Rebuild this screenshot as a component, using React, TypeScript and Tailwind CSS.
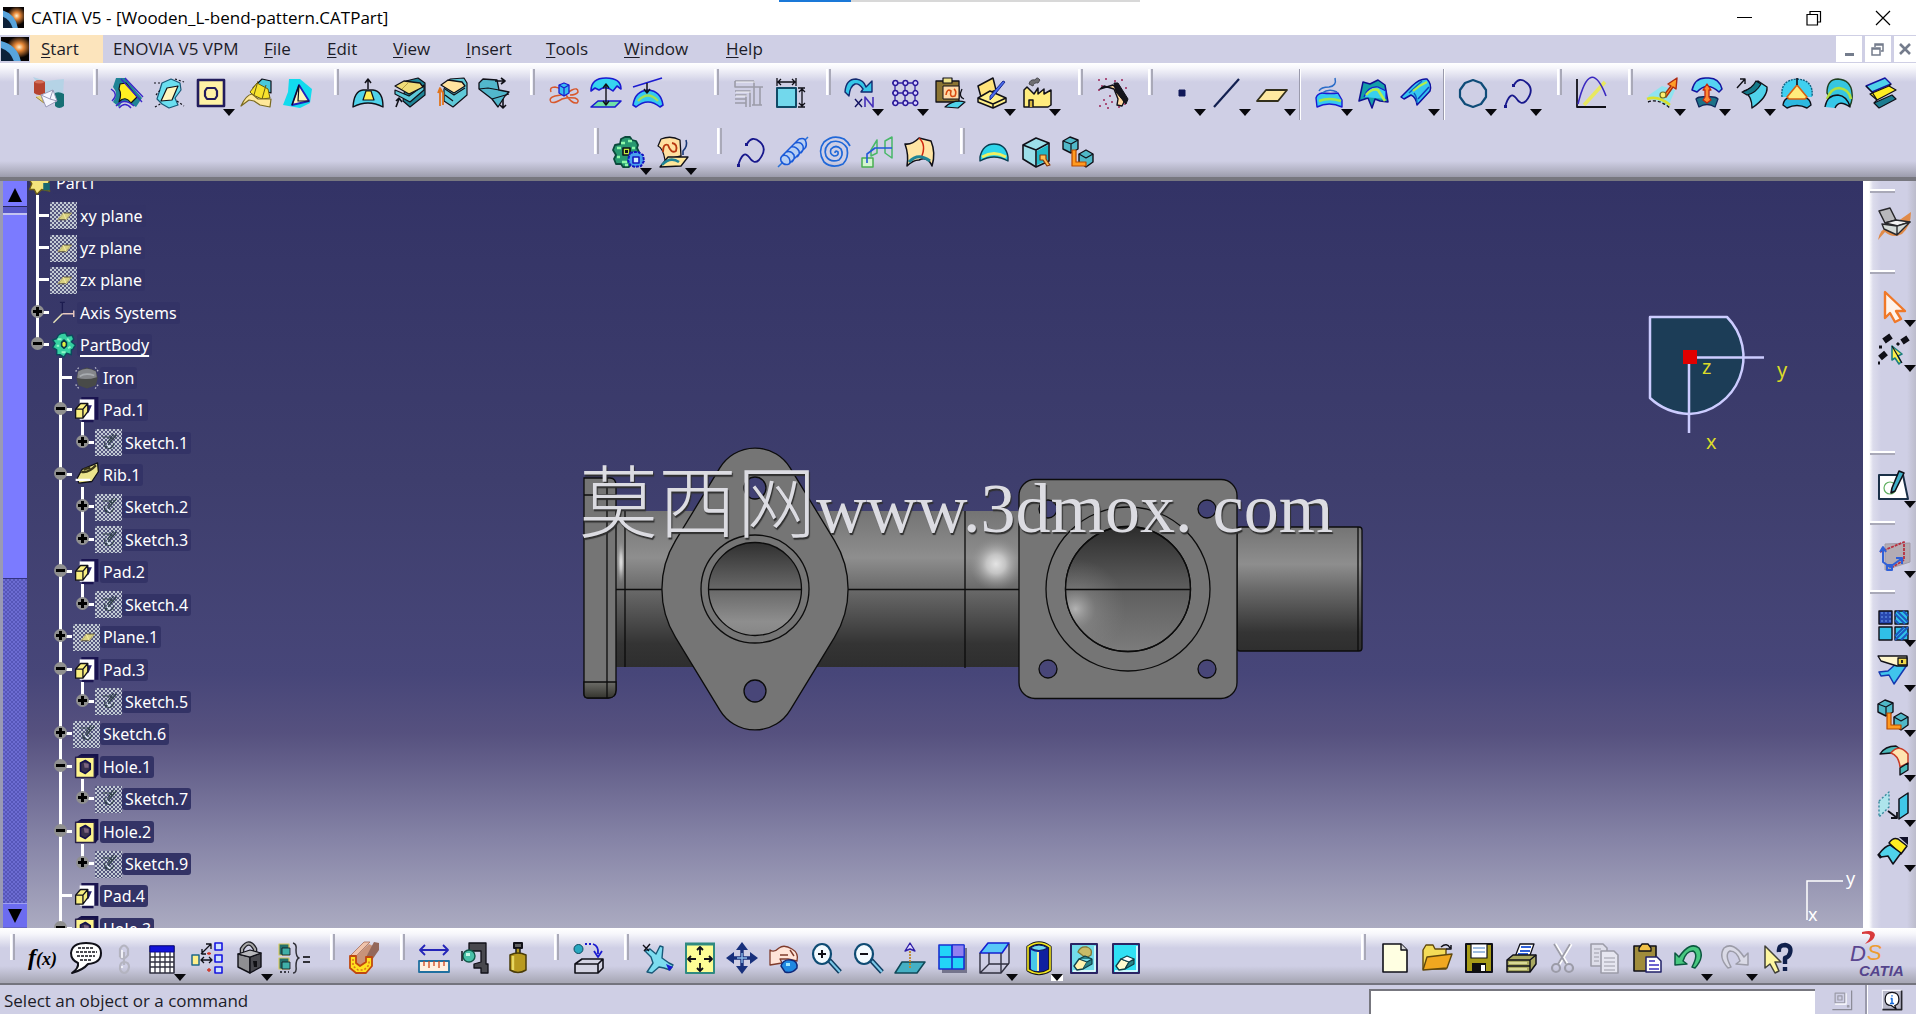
import React from "react";

type Shape = [d: string, fill?: string, stroke?: string, width?: number, dash?: string];

const K = "#101018";
const C = "#4fd2ea";
const Y = "#fff08a";
const B = "#1a1ad0";
const T = "#1f8496";
const G = "#9c9ca8";
const N = "none";

const icons: Record<string, Shape[]> = {
  studio: [
    ["M1 0 L14 4 L32 2 L31 18 L16 22 Z", "#b5d3e6", N],
    ["M2 5 Q7 1 13 5 V16 Q7 20 2 16 Z", "#b5432f", N],
    ["M2 5 Q7 8 13 5 Q7 1 2 5", "#d4705a", N],
    ["M23 16 Q27 14 32 17 V29 Q27 33 23 29 Z", "#176f74", N],
    ["M4 20 L12 26 L9 18", "#e7d78a", "#a28a30", 1],
    ["M9 18 L21 13 L25 24 L14 30 Z", "#f6f6ff", "#9a9ab8", 1],
    ["M9 18 L18 22 L21 13 M18 22 L25 24", N, "#9a9ab8", 1],
  ],
  fillet: [
    ["M5 1 L14 1 L31 21 L25 30 L20 27 Q13 20 8 30 L2 25 Q8 17 2 10 Z", T, N],
    ["M9 7 L15 6 L26 20 L20 26 Q14 18 8 25 Q11 17 8 12 Z", "#ffee22", K, 1.2],
    ["M10 2 L31 25 M14 1 L32 20 M0 12 Q8 17 1 24 M8 31 Q14 24 20 31 M5 29 Q13 20 23 29", N, "#3a28c8", 1.4],
  ],
  draft: [
    ["M9 6 L18 2 L27 6 L28 13 L22 21 L25 28 L16 31 L9 27 L4 22 Z", "#6adff0", "#185878", 1.2],
    ["M14 11 L25 9 L19 23 L8 24 Z", "#fff6bd", K, 1.2],
    ["M1 6 H9 M22 2 L31 5 M2 30 L9 26 M24 24 L31 29 M3 18 L8 12", N, K, 1.2, "2 2"],
  ],
  shell: [
    ["M3 3 H29 V29 H3 Z", "#fff3a6", "#221c5c", 2.6],
    ["M12 11 H20 L22 14 V19 L20 22 H12 L10 19 V14 Z", "#fff3a6", "#221c5c", 2.2],
  ],
  thickness: [
    ["M13 11 L22 2 L31 4 V16 L22 13 Z", "#49c8dc", K, 1.2],
    ["M10 15 L17 6 L28 12 L30 21 L22 22 L13 18 Z", "#f7e22c", "#6a5c10", 1],
    ["M1 29 Q6 18 12 17 L18 22 L31 22 L30 30 L20 28 L14 24 L9 23 Z", "#ffe89a", "#7a6a20", 1.2],
    ["M18 4 L14 18 M26 8 L22 22", N, "#6a5c10", 1],
  ],
  replaceface: [
    ["M7 2 L18 2 L30 12 L28 26 L18 31 L1 28 L6 15 Z", "#11dbee", N],
    ["M17 8 L10 28 L27 24 Z", "#fff6bd", "#2222b8", 1.8],
    ["M17 8 L16 24 L27 24 M17 8 L10 28", N, K, 1.2],
  ],
  split: [
    ["M1 30 Q2 14 11 13 L21 13 Q31 14 31 30 Q16 22 1 30 Z", C, K, 1.4],
    ["M11 23 L14 14 H19 L22 23 Z", "#ffee55", K, 1.2],
    ["M16 12 V3 M13 6 L16 2 L19 6", N, K, 1.5],
  ],
  thick: [
    ["M12 4 L24 1 L31 6 V18 L16 30 L9 24 Z", T, K, 1.2],
    ["M1 13 L15 19 L30 8 V13 L16 25 L1 17 Z", "#5cc8d8", K, 1.2],
    ["M1 9 L10 4 L26 6 L29 10 L15 17 Z", "#f0dc78", K, 1.3],
    ["M8 12 L14 6", N, "#b8a040", 1],
    ["M2 30 L5 22 M2 24 L5 21 L8 25", N, K, 1.6],
  ],
  closesurf: [
    ["M14 2 L28 1 L31 6 V18 L17 30 L8 24 V12 Z", "#5fc9d8", K, 1.2],
    ["M5 8 L12 3 L26 5 L29 9 L18 16 Z", "#ffe3a0", K, 1.3],
    ["M9 12 L18 18 L29 11 M9 18 L17 24", N, K, 1.2],
    ["M4 29 V13 M2 16 L4 11 L7 16 M7 28 V15", N, "#e0741c", 1.8],
  ],
  sew: [
    ["M1 6 L5 2 L19 3 L21 13 L31 15 L27 19 L20 30 L14 22 L1 12 Z", "#52b7cc", K, 1.3],
    ["M1 12 L10 11 L21 13 M14 22 L31 17", N, K, 1.2],
    ["M17 4 H26 M23 1 L27 4 L23 7 M25 22 V31 M22 28 L25 31 L28 28", N, K, 1.6],
  ],
  wireaxis: [
    ["M3 15 Q1 10 7 10 Q14 11 18 18 Q24 27 29 26 Q32 23 27 21 Q20 20 14 22 Q6 27 3 25 Q0 21 7 19 Q16 18 24 13 Q30 10 30 15 Q28 18 22 18", N, "#d8582c", 1.5],
    ["M16 6 L21 8 V16 L16 19 L11 16 V8 Z", "#38bdf0", B, 1.3],
    ["M11 8 L16 11 L21 8 M16 11 V19", N, B, 1.2],
  ],
  extremum: [
    ["M1 14 Q1 1 16 1 Q31 1 31 12 L27 9 L23 14 Q16 8 9 13 L5 11 Z", "#35d5f0", B, 1.6],
    ["M8 24 H31 L25 30 H1 Z", "#70e0a8", B, 1.6],
    ["M16 8 V27 M13 11 L16 7 L19 11 M13 24 L16 28 L19 24", N, K, 1.4],
  ],
  projection: [
    ["M1 28 Q3 14 16 13 Q29 14 31 28 L28 30 Q16 20 4 30 Z", "#35c9f0", B, 1.6],
    ["M6 24 Q16 13 26 24", N, "#9fe05a", 2.4],
    ["M1 10 L30 1", N, B, 1.6],
    ["M15 6 V15 M12 12 L15 16 L18 12", N, K, 1.5],
  ],
  table: [
    ["M3 4 H22 M3 4 V10 H22 V4 M3 14 H18 V30 M3 18 H14 V30 M3 22 H14 M3 26 H14 M22 10 V28 M28 10 V28 M20 28 H30 M20 10 H31", N, G, 1.6],
    ["M4 5 H23 M4 15 H19 M4 19 H15", N, "#ffffff", 0.8],
  ],
  dimension: [
    ["M3 11 H22 V30 H3 Z", "#72d8ec", "#0f4a66", 2],
    ["M3 1 V9 M22 1 V9 M4 5 H21 M7 2 L4 5 L7 8 M18 2 L21 5 L18 8 M24 11 H31 M24 30 H31 M28 12 V29 M25 15 L28 12 L31 15 M25 26 L28 29 L31 26", N, K, 1.3],
  ],
  repeat: [
    ["M1 15 Q2 2 12 2 Q20 3 22 10 L28 4 V15 L17 15 L19 12 Q15 6 11 7 Q6 9 5 19 Z", "#35c6e8", "#122a70", 1.4],
    ["M11 22 L18 30 M18 22 L11 30", N, "#101060", 1.4],
    ["M21 30 V20 L29 30 V20", N, "#4530b8", 1.6],
  ],
  pattern: [
    ["M3 6 H29 M3 16 H29 M3 26 H29 M6 3 V29 M16 3 V29 M26 3 V29", N, "#3524a8", 1.3],
    ["M4 6 a2.4 2.4 0 1 0 4.8 0 a2.4 2.4 0 1 0 -4.8 0 M14 6 a2.4 2.4 0 1 0 4.8 0 a2.4 2.4 0 1 0 -4.8 0 M24 6 a2.4 2.4 0 1 0 4.8 0 a2.4 2.4 0 1 0 -4.8 0 M4 16 a2.4 2.4 0 1 0 4.8 0 a2.4 2.4 0 1 0 -4.8 0 M14 16 a2.4 2.4 0 1 0 4.8 0 a2.4 2.4 0 1 0 -4.8 0 M24 16 a2.4 2.4 0 1 0 4.8 0 a2.4 2.4 0 1 0 -4.8 0 M4 26 a2.4 2.4 0 1 0 4.8 0 a2.4 2.4 0 1 0 -4.8 0 M14 26 a2.4 2.4 0 1 0 4.8 0 a2.4 2.4 0 1 0 -4.8 0 M24 26 a2.4 2.4 0 1 0 4.8 0 a2.4 2.4 0 1 0 -4.8 0", "#d9d0ff", "#2a1a98", 1.5],
  ],
  pastefeat: [
    ["M2 4 H25 V25 H2 Z", "#8b7432", K, 1.3],
    ["M9 1 H18 V6 H9 Z", "#eee28a", K, 1.2],
    ["M9 9 H25 V22 H9 Z", "#ffd9a6", K, 1],
    ["M12 18 Q13 11 17 14 Q15 21 21 19 Q23 14 20 12", N, "#d84a10", 1.6],
    ["M11 30 Q20 22 31 25 L24 31 Z", C, K, 1.2],
    ["M28 12 Q24 20 30 22", N, K, 1.3],
  ],
  catalog: [
    ["M2 9 L17 1 L20 13 L5 20 Z", "#ffe37a", K, 1.5],
    ["M2 21 L14 14 L30 21 V25 L17 31 L2 25 Z", "#fff08a", K, 1.5],
    ["M2 21 L17 27 L30 21 M17 27 V31", N, K, 1.5],
    ["M29 5 L16 21 L14 23 L14 19 L27 4 Z", "#4a6cf0", "#1a2a90", 1],
  ],
  factory: [
    ["M3 30 V13 L6 10 L9 13 L13 17 L17 11 V17 L23 12 V17 L30 13 V28 L27 30 Z", "#ffec7e", K, 1.5],
    ["M8 30 V23 H12 V30", "#d9b840", K, 1.5],
    ["M8 7 Q9 2 14 3 Q16 -1 19 3 L17 6 Q13 5 12 9 Z", "#6e6e72", "#4a4a50", 1],
  ],
  sparkle: [
    ["M3 2 V4 M10 1 V3 M19 3 V5 M26 2 V4 M3 12 V14 M8 22 V24 M14 18 V20 M4 28 V30 M12 30 V32 M23 29 V31 M29 26 V28 M6 8 V10 M30 10 V12 M10 26 V28 M16 24 V26", N, "#a03060", 1.6],
    ["M4 12 L8 9 L18 12 L22 22 L21 28 L26 29 L28 25 L25 16 L17 8 Z", "#ffd9a0", K, 1.4],
    ["M18 6 L22 6 L32 22 L30 27 L20 15 Z", "#15151c", K, 1],
  ],
  point: [["M13 13 H19 V19 H13 Z", "#101858", "#101858", 1]],
  line: [["M3 30 L28 2", N, "#122050", 2.2]],
  plane: [["M1 24 L10 13 H31 L22 24 Z", "#ffe9a0", "#33301c", 1.8]],
  sweep: [
    ["M3 21 Q4 17 9 16 Q18 17 25 16 L29 23 V30 Q16 24 4 30 Z", "#35c9f0", B, 1.4],
    ["M6 24 Q16 20 28 24", N, "#a0e84a", 2.6],
    ["M6 14 Q8 10 16 10 Q24 9 22 1 M9 16 Q16 11 24 15", N, "#2a6cc8", 1.5],
  ],
  loft: [
    ["M5 5 L12 7 L20 3 L27 8 L30 25 L22 24 L17 22 L14 31 L10 21 L1 24 Z", "#15a0a8", "#101090", 1.5],
    ["M6 20 Q10 9 20 10 L28 14 V22", "#38d0f0", B, 1.2],
    ["M8 18 Q14 11 20 13 L27 24", N, "#b4ee4a", 2.6],
  ],
  blend: [
    ["M1 20 L12 9 Q20 1 27 2 Q32 7 30 14 L17 28 Q16 20 11 18 L4 22 Z", "#35c6f0", "#1010a0", 1.5],
    ["M9 16 L22 4 M17 26 Q17 20 14 16", N, "#1060c0", 1.4],
    ["M13 14 Q20 8 27 5", N, "#b4ee4a", 2.2],
    ["M18 22 L29 10", N, "#1040c0", 1.6],
  ],
  circle: [["M16 3 L24 6 L29 13 V20 L24 27 L16 30 L8 27 L3 20 V13 L8 6 Z", N, "#0f4c78", 2.2]],
  spline: [
    ["M12 8 Q17 -1 25 6 Q33 13 24 24 Q19 29 14 21 Q8 13 3 30", N, "#18188c", 1.8],
    ["M10 7 h3 v3 h-3 Z M2 28 h3 v3 h-3 Z", "#18188c", N],
  ],
  graph: [
    ["M9 28 L30 5", N, "#e8e860", 3.6],
    ["M2 2 V30 H31", N, K, 1.8],
    ["M3 27 Q15 -22 31 19", N, "#3a28c0", 1.6],
  ],
  extrapol: [
    ["M3 18 L16 9 L29 13 L22 30 Q14 22 1 22 Z", "#8fe4f0", N],
    ["M1 22 Q12 18 24 28", N, "#d8e030", 2.6],
    ["M2 25 Q12 21 24 31", N, K, 1.4, "3 2"],
    ["M18 18 L25 9 L22 7 L31 1 L30 12 L27 10 L20 20 Z", "#ff9d28", "#b02a10", 1.4],
    ["M14 18 a3 3 0 1 0 6 0 a3 3 0 1 0 -6 0", "#ffee70", "#707020", 1.2],
  ],
  offset: [
    ["M1 13 Q4 0 16 1 Q28 0 31 12 L28 15 Q16 4 6 15 Z", "#55d4f2", "#1414a0", 1.5],
    ["M5 22 Q8 19 16 20 Q24 19 27 22 L24 30 Q16 25 8 30 Z", "#1c7288", "#10285c", 1.3],
    ["M12 13 L16 7 L20 13 H18 V20 L20 23 L16 26 L12 23 L14 20 V13 Z", "#ff8a30", "#c02810", 1.3],
  ],
  translatesurf: [
    ["M8 14 Q16 12 22 4 L31 10 Q32 20 16 31 Q16 19 8 14 Z", C, K, 1.4],
    ["M6 15 Q16 12 20 4 L25 7 Q20 16 11 18 Z", "#167a8a", K, 1.2],
    ["M1 11 L9 2 M4 2 H9 V7", N, K, 1.4],
  ],
  dome: [
    ["M1 20 Q-1 3 16 2 Q33 3 31 20", "#40d0f0", "#106080", 1.4, "2 1"],
    ["M2 28 Q3 22 7 21 H25 Q29 22 30 28 L26 31 Q16 26 6 31 Z", "#2cb8e0", K, 1.4],
    ["M16 8 L26 20 L24 22 H8 L6 20 Z", "#ffec7c", "#d86010", 1.6],
    ["M16 1 V8", N, K, 1.6],
  ],
  bumps: [
    ["M4 16 Q4 2 15 2 Q28 3 29 16 Q30 22 27 29 Q22 18 8 22 Z", "#36c6e0", "#204020", 1.4],
    ["M4 22 Q8 11 16 11 Q26 12 28 22", N, "#b0e040", 2.6],
    ["M2 30 Q4 18 15 18 Q24 19 27 30 Q16 22 12 31", "#35c6e8", K, 1.4],
  ],
  stack: [
    ["M1 9 L20 1 L26 7 L7 15 Z", C, "#1414a0", 1.4],
    ["M5 17 L24 9 L31 13 L12 23 Z", "#ffee22", K, 1.2],
    ["M9 26 L27 18 L31 22 L14 31 Z", "#1c7c90", K, 1.2],
    ["M1 9 L7 15 L12 23 L9 26 M26 7 L24 9", N, K, 1.3],
  ],
  gears: [
    ["M9 3 L13 1 L18 1 L20 4 L24 5 L26 9 L25 12 L27 16 L25 20 L25 25 L20 27 L17 31 L11 31 L9 28 L4 28 L2 23 L4 19 L1 14 L3 9 L8 8 Z", "#279870", "#0c4a3c", 1.8],
    ["M9 7 H13 M16 5 H20 M5 12 H9 M5 21 H8 M10 26 H15 M20 12 H23 M13 29 H16", N, "#8cf8a8", 2.4],
    ["M11 12 H18 V19 H11 Z", "#c0e840", K, 1.6],
    ["M13 14 H16 V17 H13 Z", K, N],
    ["M18 17 L22 16 L26 16 L31 19 L32 25 L29 30 L23 31 L18 29 L16 24 Z", "#48a0ee", "#1414c0", 2, "3 1"],
    ["M21 21 H27 V27 H21 Z", "#d0f0ff", "#1414c0", 1.6],
  ],
  sketchpos: [
    ["M4 3 Q14 -1 23 4 L24 20 L8 24 Q6 12 1 10 Z", "#ffe0a0", K, 1.3],
    ["M6 16 Q6 7 11 9 Q14 18 19 15 Q21 8 15 7", N, "#b83810", 1.8],
    ["M3 31 L11 21 H31 L24 30 Z", "#ffe79a", K, 1.3],
    ["M5 29 Q13 20 22 26", N, T, 2.6],
    ["M29 4 Q31 10 26 15 V19", N, "#183878", 1.6],
  ],
  helix: [
    ["M1 31 L7 25 M26 6 L31 1", N, "#2870d8", 1.5],
    ["M5 20 L22 3 H27 L29 6 V11 L12 28 H7 L4 25 Z", "#b8d0f4", N],
    ["M5 20 Q9 18 12 22 Q14 26 12 28 Q7 30 4 25 Q3 22 5 20 M9 16 Q14 14 17 19 Q18 23 15 26 M14 11 Q19 10 22 15 Q23 19 20 21 M18 7 Q24 5 26 10 Q27 14 24 17 M22 3 Q28 1 29 6 Q30 10 28 12 M5 20 L22 3 M12 28 L29 11", N, "#1a5ad8", 1.5],
  ],
  spiral: [["M16 17 Q16 14 19 16 Q20 20 15 20 Q10 18 12 13 Q17 8 22 13 Q25 19 20 24 Q11 27 7 20 Q4 11 12 6 Q22 3 28 12 Q30 22 24 28 Q13 33 5 26 Q-2 15 5 6 Q14 -2 25 3 Q29 6 31 10", N, "#2068d8", 1.7]],
  polywire: [
    ["M1 22 H12 V31 H1 Z", "#d4f4d0", "#48b050", 1.5],
    ["M10 14 L16 4 V17 L10 20 Z M24 5 L31 1 V22 L24 17 Z", N, "#48b868", 1.5],
    ["M6 27 V18 L14 12 H31", N, "#2058d8", 1.6],
  ],
  foldsurf: [
    ["M2 8 Q9 9 16 2 L28 5 Q33 17 29 30 Q25 20 16 24 Q10 24 4 30 Q6 19 2 8 Z", "#ffe5a4", K, 1.5],
    ["M16 2 Q24 9 18 22", N, "#d02810", 1.5],
    ["M6 26 Q15 16 27 25", N, T, 3],
  ],
  domecap: [
    ["M2 21 Q5 8 16 8 Q28 8 30 21 V25 Q16 17 2 25 Z", "#2fd5ea", "#083c50", 1.4],
    ["M4 21 Q16 14 28 21", N, "#f0f060", 2.8],
  ],
  boxtool: [
    ["M3 9 L16 2 L29 7 V25 L16 31 L3 23 Z", "#9cdfea", K, 1.6],
    ["M3 9 L16 14 L29 7 M16 14 V31", N, K, 1.6],
    ["M17 15 L28 9 V24 L17 29 Z", "#20b8c8", N],
    ["M20 19 h6 v4 l4 6 l-3 1 l-4 -6 h-3 Z", "#ffbe50", "#8a3a10", 1.2],
  ],
  boxmove: [
    ["M1 5 L8 1 L16 4 V13 L9 17 L1 13 Z", "#50b8c8", K, 1.4],
    ["M1 5 L9 8 L16 4 M9 8 V17", N, K, 1.2],
    ["M17 18 L24 14 L31 18 V26 L24 31 L17 26 Z", "#50b8c8", K, 1.4],
    ["M17 18 L24 22 L31 18", N, K, 1.2],
    ["M10 14 L14 14 V26 H24 V30 H10 Z", "#ff9a20", "#b84a00", 1.2],
  ],
  comment: [
    ["M16 1 Q31 1 31 11 Q31 21 18 22 Q13 28 2 31 Q9 26 8 21 Q1 18 1 11 Q2 1 16 1 Z", "#ffffff", K, 2],
    ["M8 6 H24 M6 10 H27 M7 14 H25 M10 18 H22", N, K, 1.6, "3 1"],
  ],
  chain: [
    ["M12 15 V7 Q16 0 20 7 V13 Q16 19 12 15 M12 26 Q12 20 16 20 Q21 20 21 25 Q20 31 16 31 Q12 30 12 26 M16 10 V23", N, "#b4b4c0", 2.2],
    ["M14 16 V8 M14 26 V24", N, "#ffffff", 1.4],
  ],
  calendar: [
    ["M4 4 H28 V31 H4 Z", "#ffffff", "#303040", 1.6],
    ["M4 4 H28 V10 H4 Z", "#1212d8", "#0808a0", 1],
    ["M4 15 H28 M4 20 H28 M4 25 H28 M9 10 V31 M14 10 V31 M19 10 V31 M24 10 V31", N, "#303040", 1.3],
  ],
  relations: [
    ["M1 13 H8 V23 H1 Z", Y, "#20688a", 1.5],
    ["M24 1 H31 V8 H24 Z M24 13 H31 V20 H24 Z M24 25 H31 V31 H24 Z", "#cfe2ff", "#1616e0", 1.6],
    ["M10 12 L20 2 M15 2 H20 V7 M11 7 V12 H15 M10 18 H21 M13 15 L10 18 L13 21 M18 15 L21 18 L18 21", N, K, 1.3],
    ["M18 10 V13 M16 11.500 H20 M18 26 V30 M16 28 H20", N, "#d03020", 1.3],
  ],
  lock: [
    ["M9 14 V7 Q16 -4 22 7 V13", N, "#202028", 4.6],
    ["M9 14 V7 Q16 -4 22 7 V13", N, "#a8a8a8", 2],
    ["M5 12 L17 15 V31 L5 25 Z", "#8e8e92", K, 1.4],
    ["M17 15 L28 11 V25 L17 31 Z", "#48484e", K, 1.4],
    ["M5 12 L17 8 L28 11 L17 15 Z", "#b8b8bc", K, 1.2],
    ["M20 19 h4 v6 h-3 Z", "#101014", N],
  ],
  equiv: [
    ["M1 2 H11 V13 H1 Z M1 16 H11 V27 H1 Z", "#22706c", "#d8c860", 1.2],
    ["M4 6 H12 V13 H4 Z M4 20 H12 V27 H4 Z", "#3fb0a8", K, 0.8],
    ["M2 30 H11", N, K, 1.6, "2 2"],
    ["M15 1 Q19 2 18 8 Q18 15 21 16 Q18 17 18 24 Q19 31 15 31", N, "#303038", 1.5],
    ["M25 15 H32 M25 20 H32", N, "#303038", 1.8],
  ],
  channel: [
    ["M2 14 L16 0 H22 L8 14 Z", "#f0c4ac", "#a8705a", 0.8],
    ["M8 14 L21 2 L25 4 L18 15 V20 L13 24 L8 22 Z", "#c8937a", N],
    ["M18 15 L26 0 L31 1 L31 8 L24 18 Z", "#94685a", N],
    ["M2 14 H8 V21 L12 24 L18 20 V15 H24 V24 L18 31 H8 L2 26 Z", "#ffe020", "#c04810", 1.8],
    ["M5 17 V24 L10 28 H16 L21 23 V18", N, "#e07818", 1.6, "2 2"],
  ],
  measure: [
    ["M2 8 H30 M7 3 L2 8 L7 13 M25 3 L30 8 L25 13", N, "#2424b8", 1.8],
    ["M1 19 H31 V30 H1 Z", "#fff0e0", "#2070a0", 1.8],
    ["M6 19 V24 M11 19 V26 M16 19 V24 M21 19 V26 M26 19 V24", N, "#d04820", 1.3],
  ],
  clamp: [
    ["M9 1 H26 V22 H28 V31 H21 V26 H14 V22 L21 20 V9 H9 Z", "#48484e", K, 1.3],
    ["M3 14 a6 6 0 1 0 12 0 a6 6 0 1 0 -12 0", "#48c0a8", "#105848", 1.4],
    ["M6 11 h4 v3 h-4 Z", "#c8f8e8", N],
    ["M2 9 V19", N, K, 1.5],
  ],
  weight: [
    ["M12 1 H20 V6 H12 Z", "#606060", K, 2],
    ["M14 6 H18 V12 H14 Z", "#b09820", K, 1.4],
    ["M8 13 Q16 9 24 13 V28 Q16 33 8 28 Z", "#b89a20", "#4a3c08", 1.5],
    ["M11 14 V28", N, "#e8d860", 2.4],
  ],
  replay: [
    ["M2 7 a4.500 4.500 0 1 0 9 0 a4.500 4.500 0 1 0 -9 0", "#28a8c0", "#0c4a60", 1],
    ["M13 2 H21", N, B, 1.8, "2 2"],
    ["M21 2 Q27 4 26 12 M22 9 L26 15 L30 9", N, B, 1.8],
    ["M3 22 L10 17 H31 V26 L26 31 H3 Z M3 22 H26 V31 M26 22 L31 17", "#d4d4e2", K, 1.6],
  ],
  plane3d: [
    ["M3 9 L8 7 L14 12 L18 4 L21 5 L20 16 L27 21 L31 23 L28 28 L22 26 L17 25 L10 31 L5 30 L11 21 L9 15 Z", "#7cdcf0", "#185878", 1.4],
    ["M1 3 L7 9 M8 2 L2 9", N, K, 1.4],
    ["M24 22 L31 25 L27 29 Z", B, N],
  ],
  fit: [
    ["M2 2 H30 V31 H2 Z", "#fdfd96", "#2f8a80", 2],
    ["M1 2 H31", N, "#2f8a80", 3],
    ["M16 5 V13 M13 8 L16 5 L19 8 M16 21 V29 M13 26 L16 29 L19 26 M4 17 H12 M7 14 L4 17 L7 20 M20 17 H28 M25 14 L28 17 L25 20", N, K, 1.8],
  ],
  pan: [
    ["M16 3 V29 M3 16 H29", N, "#18307c", 3.4],
    ["M10 8 L16 0 L22 8 Z M10 24 L16 32 L22 24 Z M8 10 L0 16 L8 22 Z M24 10 L32 16 L24 22 Z", "#18307c", N],
    ["M16 11 V21 M11 16 H21", N, "#8ab8e8", 1.4],
  ],
  rotate: [
    ["M2 8 Q6 11 11 6 Q16 2 24 7 Q31 11 29 19 L20 17 L12 17 L14 21 L2 23 Z", "#ffe4d8", "#803c2c", 1.3],
    ["M12 13 H20 M22 8 L26 14", N, "#803c2c", 1.4],
    ["M13 24 Q15 17 23 18 Q30 19 29 26 Q24 32 17 30 Z", "#2088e0", "#102878", 1.4],
    ["M18 21 h4 v3 h-4 Z", "#a0e8ff", N],
  ],
  zoomin: [
    ["M19 18 L30 30", N, "#0f3c60", 5],
    ["M20 19 L30 30", N, "#7cc8e8", 2],
    ["M3 12 a9 10 0 1 0 18 0 a9 10 0 1 0 -18 0", "#f4fbff", "#0f4c74", 2.2],
    ["M8 12 H16 M12 8 V16", N, K, 2],
  ],
  zoomout: [
    ["M19 18 L30 30", N, "#0f3c60", 5],
    ["M20 19 L30 30", N, "#7cc8e8", 2],
    ["M3 12 a9 10 0 1 0 18 0 a9 10 0 1 0 -18 0", "#f4fbff", "#0f4c74", 2.2],
    ["M8 12 H16", N, K, 2],
  ],
  normal: [
    ["M8 20 H31 L23 31 H1 Z", "#45b0c4", "#104858", 1.5],
    ["M16 26 V8", N, "#c08828", 1.8, "2 1"],
    ["M11 9 L16 1 L21 9 L16 7 Z", "#e4dcff", "#3020a8", 1.4],
  ],
  multiview: [
    ["M6 6 H31 V31 H6 Z", "#74748c", N],
    ["M3 3 H28 V27 H3 Z", "#22d4f8", "#1a30d0", 1.6],
    ["M16 3 H28 V15 H16 Z", "#9080f0", "#1a30d0", 1],
    ["M16 3 V27 M3 15 H28", N, "#1a30d0", 1.6],
  ],
  cube: [
    ["M10 1 H31 L24 11 H2 Z", "#58c8f8", "#1420d0", 1.6],
    ["M2 11 V31 H23 V11 M23 31 L31 21 V2 M2 31 L11 22 H31 M11 22 V11", N, "#303040", 1.4],
  ],
  cylinder: [
    ["M5 5 Q16 -3 27 5 V28 Q16 35 5 28 Z", "#1020a0", "#181818", 3.4],
    ["M5 5 Q16 -3 27 5 V28 Q16 35 5 28 Z", N, "#f4e820", 1.6],
    ["M8 8 Q12 10 15 10 V29 Q10 29 8 27 Z", "#48c8e8", N],
    ["M15 10 V29", N, "#f4f0a0", 2],
    ["M7 6 Q16 11 25 6 Q16 0 7 6", "#70d8f0", "#101860", 1.2],
  ],
  hide: [
    ["M3 2 H29 V31 H3 Z", "#72dcea", "#2a2464", 2],
    ["M5 29 H27 V4", N, "#ffffff", 1.3],
    ["M10 10 Q12 4 19 5 Q25 7 23 13 L18 16 Z", "#c8bc68", "#807838", 1.3],
    ["M6 24 L11 17 L19 20 L15 27 L9 28 Z", "#fff4b0", "#104048", 1.3],
    ["M15 27 L24 22 V17 L19 20 M11 17 L17 14 L24 17", "#2a8488", "#104048", 1.2],
  ],
  swap: [
    ["M3 2 H29 V31 H3 Z", "#30e0f4", "#2a2464", 2],
    ["M5 29 H27 V4", N, "#ffffff", 1.5],
    ["M6 24 L11 17 L19 20 L15 27 L9 28 Z", "#fffcd0", "#104048", 1.3],
    ["M15 27 L24 22 V17 L19 20 Z", "#2a8488", "#104048", 1.2],
    ["M11 17 L17 14 L24 17 L19 20 Z", "#ffffff", "#104048", 1.2],
  ],
  newdoc: [["M4 2 H22 L28 8 V30 H4 Z", "#ffffe2", K, 1.6], ["M22 2 V8 H28", "#d8d8d8", K, 1.4]],
  open: [
    ["M2 8 L5 3 H12 L14 7 H25 V27 H2 Z", "#f4dc58", "#60480c", 1.4],
    ["M6 15 L31 12 L26 26 L2 28 Z", "#f0a820", "#60480c", 1.4],
    ["M20 5 Q26 0 29 6 M25 7 H30 V3", N, K, 1.5],
  ],
  save: [
    ["M3 2 H29 V30 H3 Z", "#a89c18", K, 2],
    ["M8 2 H24 V16 H8 Z", "#ffffff", K, 1.2],
    ["M10 6 H22 M10 10 H22", N, "#80a8d8", 1.3],
    ["M9 21 H23 V30 H9 Z", "#101010", N],
    ["M18 23 H22 V29 H18 Z", "#ffffff", N],
  ],
  print: [
    ["M10 15 L15 2 H29 L24 16 Z", "#ffffff", K, 1.3],
    ["M16 5 H26 M15 9 H25 M13 12 H23", N, "#3060d8", 1.8],
    ["M2 18 L8 13 H31 V22 L25 30 H2 Z", "#a8a860", K, 1.5],
    ["M2 18 H25 L31 13 M25 18 V30 M2 24 H25", N, K, 1.4],
    ["M4 21 H22 M4 27 H22", N, "#e8e8a8", 1.6],
  ],
  cut: [
    ["M8 2 L20 22 M24 2 L12 22", N, "#ffffff", 3.4],
    ["M7 2 L19 22 M23 2 L11 22", N, G, 1.8],
    ["M5 26 a4 4 0 1 0 8 0 a4 4 0 1 0 -8 0 M18 26 a4 4 0 1 0 8 0 a4 4 0 1 0 -8 0", N, G, 2.2],
  ],
  copy: [
    ["M2 2 H14 L18 6 V24 H2 Z", "#dedeea", G, 1.6],
    ["M12 9 H25 L29 13 V31 H12 Z", "#e6e6f0", G, 1.6],
    ["M5 7 H12 M5 11 H10 M5 15 H10 M5 19 H10 M15 16 H26 M15 20 H26 M15 24 H26 M15 28 H26", N, G, 1.2],
  ],
  paste: [
    ["M3 4 H25 V29 H3 Z", "#a08c3c", K, 1.6],
    ["M8 6 L11 2 H17 L20 6 V9 H8 Z", "#f0c048", K, 1.3],
    ["M15 15 H26 L30 19 V30 H15 Z", "#ffffff", "#202068", 1.5],
    ["M18 19 H24 M18 23 H28 M18 27 H28", N, "#3c30c0", 1.4],
  ],
  undo: [["M2 11 V23 L14 22 L10 19 Q13 9 20 9 Q26 12 19 25 L22 26 Q32 15 26 6 Q17 -1 6 15 Z", "#48c880", "#0c5840", 1.5]],
  redo: [["M30 11 V23 L18 22 L22 19 Q19 9 12 9 Q6 12 13 25 L10 26 Q0 15 6 6 Q15 -1 26 15 Z", "#dadae6", G, 1.5]],
  whatsthis: [
    ["M16 10 Q15 3 22 3 Q29 4 27 11 Q26 15 22 16 V22 M22 25 V29", N, "#10204c", 4.4],
    ["M2 4 V26 L7 22 L12 31 L16 29 L12 20 H18 Z", "#fdf6a0", "#404038", 1.5],
  ],
  workbench: [
    ["M1 32 Q3 20 14 18 L34 4 Q34 18 25 26 Q16 31 8 24 Z", "#e08a48", N],
    ["M2 3 L13 0 L19 12 L8 15 Z", "#b8b8bc", "#28282c", 1.5],
    ["M8 15 L19 12 L33 14 L21 18 Z", "#f4f4f4", "#28282c", 1.4],
    ["M5 16 L20 18 V27 L7 21 Z M20 18 L33 14 L20 27 Z", "#d4dad8", "#28282c", 1.4],
  ],
  select: [["M8 3 V29 L13 24 L18 33 L24 30 L19 22 H28 Z", "#fff4ec", "#f07828", 2.4]],
  seltrap: [
    ["M7 7 L14 2 M25 8 L31 4 M3 24 L9 19", N, K, 6],
    ["M2 13 H5 M1 29 H3 M20 11 L22 9", N, K, 3],
    ["M15 12 V26 L18 24 L22 30 L24 28 L21 22 L25 20 Z", "#fff04a", "#1c8080", 1.6],
    ["M15 12 L25 29", N, K, 1.2],
  ],
  sketcher: [
    ["M2 5 H26 L31 29 H2 Z", "#ffffff", "#1a3048", 2],
    ["M7 18 a6 6 0 1 0 12 0 a6 6 0 1 0 -12 0", N, "#60b060", 1.2],
    ["M22 1 L27 3 L18 21 L14 23 L15 18 Z", "#40b0c8", K, 1.6],
  ],
  axisplane: [
    ["M8 4 L33 3 V22 L8 30 Z", "#b4acb4", "#a09aa8", 1],
    ["M3 12 L27 2 V20 L14 28", N, "#b83040", 1.8, "3 1"],
    ["M6 8 V22 L13 27 L24 19 M3 12 L6 7 L9 12 M19 18 H25 V24 M10 25 h5 v5 h-5 Z", N, "#3060d8", 2],
  ],
  fourpat: [
    ["M2 2 H15 V15 H2 Z", "#2848b0", K, 1.4],
    ["M18 2 H31 V15 H18 Z M2 18 H15 V31 H2 Z M18 18 H31 V31 H18 Z", "#30c0e8", K, 1.4],
    ["M18 5 L28 15 M20 2 L31 13 M26 2 L31 7 M18 11 L22 15 M18 27 L27 18 M18 31 L31 18 M24 31 L31 24", N, "#1c58c0", 2],
    ["M4 4 H14 M4 8 H14 M4 12 H14", N, "#70a0f0", 1.2, "2 2"],
  ],
  cutsurf: [
    ["M2 18 L11 17 L20 9 L30 11 L17 30 L12 21 L4 22 Z", "#40c4ec", "#1438b0", 1.5],
    ["M1 2 H30 V12 H20 L4 7 Z", "#fff6cc", K, 1.4],
    ["M21 4 H30 V11 H21 Z", "#f0d848", K, 1.3],
    ["M25 6 V9", N, K, 1.8],
  ],
  arcsurf: [
    ["M3 10 Q8 2 19 2 L22 4 L14 9 Z", "#48b8b8", K, 1.4],
    ["M14 9 Q22 -1 31 10 V19 L23 23 Q22 12 14 9 Z", "#ffe4b0", "#c83c28", 1.5],
    ["M23 24 L31 19 V26 L23 31 Z", "#48b8b8", K, 1.4],
  ],
  offsetplane: [
    ["M22 10 L31 4 V24 L22 30 Z", "#40c8e8", K, 1.5],
    ["M2 12 L12 3 V18 L2 28 Z", "#aee4ec", "#38889c", 1.4, "2 2"],
    ["M11 22 L19 28 M20 23 V29 H14", N, K, 1.8],
  ],
  yellowcyan: [
    ["M12 9 Q16 3 21 5 L30 12 L24 20 Z", "#ffee22", K, 1.5],
    ["M2 20 Q8 12 13 11 L24 19 L16 30 L11 22 L4 23 Z", C, K, 1.5],
    ["M22 3 H31 V11 Z", "#101028", N],
    ["M1 20 L4 24", N, K, 2.4],
  ],
  infobox: [
    ["M2 2 H30 V30 H2 Z", "#b8b8c8", "#f8f8ff", 1.5],
    ["M30 2 V30 H2", N, "#26262e", 2.4],
    ["M16 5 Q26 5 26 15 Q26 23 20 24 L22 29 L15 24 Q6 24 6 15 Q6 5 16 5 Z", "#ffffff", K, 1.8],
    ["M16 9 V11 M14 14 H16 V21 M13 21 H19", N, "#1468d8", 2.2],
  ],
  greybox: [
    ["M2 30 H30 V2", N, "#8c8c98", 1.8],
    ["M6 6 H20 V20 H6 Z M10 10 H16 V16 H10 Z M24 24 h2 v2 h-2 Z", N, "#9c9ca8", 1.8],
    ["M22 6 V22 H6", N, "#ffffff", 1.5],
  ],
  plane27: [["M8 21 L15 12 H26 L19 21 Z", "#d8d080", "#57503a", 1.4], ["M8 21 L15 12 L19 21 L26 12", N, "#fff6b0", 1]],
  sketch27: [
    ["M7 8 H17 L20 11 M11 14 a6 6 0 1 0 11 3", N, "#304048", 1.5],
    ["M26 5 L15 18 L11 22 M22 4 L14 15", N, "#304048", 1.7],
    ["M13 18 L17 22", N, "#e8f4ff", 1.5],
  ],
  axis27: [["M14 2 V17 M11 3 H17", N, "#1c1c50", 1.6], ["M14 17 H28 M28 13 V21", N, "#e8c8c0", 1.8], ["M14 17 L3 28", N, "#e8e4b8", 1.8]],
  gear27: [
    ["M12 2 L18 1 L20 5 L26 4 L28 9 L25 12 L30 16 L27 21 L25 22 L25 28 L19 26 L16 31 L11 28 L7 28 L7 22 L2 19 L5 14 L2 10 L7 8 L9 4 Z", "#35cfa0", "#0c4a5c", 1.8],
    ["M8 9 H13 M20 8 L23 12 M7 17 H10 M21 20 L24 18 M13 25 H18", N, "#8cf8c8", 2.4],
    ["M13 13 L16 10 L19 13 V17 L16 20 L13 17 Z", "#e0f040", "#083848", 2],
  ],
  iron27: [
    ["M5 7 L16 3 L27 7 L29 16 L27 25 L16 29 L5 25 L3 16 Z", "#484a48", N],
    ["M5 8 Q16 1 27 8 L28 15 Q16 19 4 16 Z", "#84868a", N],
    ["M7 14 Q14 9 25 13", N, "#a8acb0", 2],
    ["M2 8 L6 3 M26 3 L30 8 M2 24 L6 29 M26 29 L30 24", N, "#b8b8c8", 1.6, "2 2"],
  ],
  pad27: [
    ["M9 0 H30 V28 H24 V31 H10", "#1a1450", N],
    ["M7 3 H25 V28 H7 Z", "#ffffff", N],
    ["M13 10 H22 L18 19 L13 22 Z", "#262070", N],
    ["M2 15 L8 8 L17 8 L11 15 Z M2 15 H11 V26 H2 Z M11 15 L17 8 V18 L11 26 Z", "#f8ee80", K, 1.6],
  ],
  rib27: [
    ["M4 20 L10 9 L29 1 L30 12 L22 24 L6 26 Z", "#ece48c", K, 1.6],
    ["M9 12 Q18 14 27 4 M12 9 L20 7", N, "#3c3818", 3],
    ["M2 22 H20", N, "#ffffff", 2.8],
  ],
  hole27: [
    ["M4 3 L9 0 H30 V25 L26 30 Z", "#14104a", N],
    ["M2 4 H25 V29 H2 Z", "#fdf48c", "#282048", 1.8],
    ["M8 11 L14 8 L20 12 V19 L14 24 L8 21 Z", "#38304c", "#14104a", 2],
    ["M12 11 L18 12 V17 L13 17 Z", "#7c6480", N],
  ],
  root27: [
    ["M3 12 L10 6 L18 8 L24 5 L28 12 L25 20 L28 26 L18 24 L12 30 L9 24 L3 24 L6 17 Z", "#f4e47c", "#6c5c14", 1.6],
    ["M20 16 H28 V25 H20 Z", "#186870", N],
  ],
};

function Icon({ name, className = "size-8" }: { name: string; className?: string }) {
  return (
    <svg viewBox="0 0 32 32" className={className + " shrink-0 overflow-visible"} aria-hidden="true">
      {icons[name].map(([d, fill = "none", stroke = K, width = 1.4, dash], i) => (
        <path key={i} d={d} fill={fill} stroke={stroke} strokeWidth={width} strokeDasharray={dash} strokeLinejoin="round" />
      ))}
    </svg>
  );
}

function Arrow({ className }: { className: string }) {
  return (
    <svg viewBox="0 0 12 7" className={"absolute h-[7px] w-3 " + className} aria-hidden="true">
      <path d="M0 0 H12 L6 7 Z" fill="#08080c" />
    </svg>
  );
}

function Tools({ label, items, className = "" }: { label: string; items: string[]; className?: string }) {
  return (
    <div role="toolbar" aria-label={label} className={"flex items-start " + className}>
      <span className="mt-[6px] mr-2 h-[26px] w-[5px] border-r-2 border-l-2 border-l-white border-r-[#a9a9b8] bg-[#ececf6]" />
      {items.map((item, i) => {
        if (item === "|")
          return <span key={i} className="mt-[6px] mr-[7px] ml-[3px] h-[51px] w-[2px] border-l border-l-[#9a9aac] bg-white" />;
        const menu = item.endsWith("+");
        const name = menu ? item.slice(0, -1) : item;
        const width = menu ? "w-[45px]" : name === "chain" ? "w-[34px]" : "w-[42px]";
        return (
          <button key={i} type="button" aria-label={name} className={"relative mt-[14px] flex h-8 shrink-0 items-center " + width}>
            {name === "formula" ? (
              <span className="pl-[5px] font-['Liberation_Serif',serif] text-[24px] leading-8 font-bold text-black italic">
                f<span className="text-[18px]">(x)</span>
              </span>
            ) : (
              <Icon name={name} className={name === "chain" ? "ml-[1px] size-8" : "ml-[5px] size-8"} />
            )}
            {menu && <Arrow className={name === "cylinder" ? "top-8 left-[33px] bg-white" : "top-8 left-[33px]"} />}
          </button>
        );
      })}
    </div>
  );
}

function SideTools({ label, items, className }: { label: string; items: string[]; className: string }) {
  return (
    <div role="toolbar" aria-orientation="vertical" aria-label={label} className={"flex flex-col " + className}>
      <span className="mb-2 ml-[7px] h-[4px] w-[25px] border-b-2 border-b-[#a9a9b8] bg-white" />
      {items.map((item) => {
        const menu = item.endsWith("+");
        const name = menu ? item.slice(0, -1) : item;
        return (
          <button key={item} type="button" aria-label={name} className="relative flex h-[45px] w-full items-center pl-[14px]">
            <Icon name={name} />
            {menu && <Arrow className="right-0 bottom-0" />}
          </button>
        );
      })}
    </div>
  );
}

function AppLogo({ className }: { className: string }) {
  return (
    <svg viewBox="0 0 24 24" preserveAspectRatio="none" className={className} aria-hidden="true">
      <defs>
        <radialGradient id="glow" cx="0.65" cy="0.42" r="0.45">
          <stop offset="0" stopColor="#fff2d0" />
          <stop offset="0.35" stopColor="#e88838" />
          <stop offset="1" stopColor="#080404" />
        </radialGradient>
      </defs>
      <rect width="24" height="24" fill="url(#glow)" />
      <path d="M0 4 Q14 8 17 24 H0 Z" fill="#58a4dc" />
      <path d="M0 11 Q8 14 11 24 H0 Z" fill="#0c2038" />
    </svg>
  );
}

type Node = { label: string; icon: string; level: number; mark?: "+" | "-"; last?: boolean };

const tree: Node[] = [
  { label: "Part1", icon: "root27", level: -1 },
  { label: "xy plane", icon: "plane27", level: 0 },
  { label: "yz plane", icon: "plane27", level: 0 },
  { label: "zx plane", icon: "plane27", level: 0 },
  { label: "Axis Systems", icon: "axis27", level: 0, mark: "+" },
  { label: "PartBody", icon: "gear27", level: 0, mark: "-", last: true },
  { label: "Iron", icon: "iron27", level: 1 },
  { label: "Pad.1", icon: "pad27", level: 1, mark: "-" },
  { label: "Sketch.1", icon: "sketch27", level: 2, mark: "+", last: true },
  { label: "Rib.1", icon: "rib27", level: 1, mark: "-" },
  { label: "Sketch.2", icon: "sketch27", level: 2, mark: "+" },
  { label: "Sketch.3", icon: "sketch27", level: 2, mark: "+", last: true },
  { label: "Pad.2", icon: "pad27", level: 1, mark: "-" },
  { label: "Sketch.4", icon: "sketch27", level: 2, mark: "+", last: true },
  { label: "Plane.1", icon: "plane27", level: 1, mark: "+" },
  { label: "Pad.3", icon: "pad27", level: 1, mark: "-" },
  { label: "Sketch.5", icon: "sketch27", level: 2, mark: "+", last: true },
  { label: "Sketch.6", icon: "sketch27", level: 1, mark: "+" },
  { label: "Hole.1", icon: "hole27", level: 1, mark: "-" },
  { label: "Sketch.7", icon: "sketch27", level: 2, mark: "+", last: true },
  { label: "Hole.2", icon: "hole27", level: 1, mark: "-" },
  { label: "Sketch.9", icon: "sketch27", level: 2, mark: "+", last: true },
  { label: "Pad.4", icon: "pad27", level: 1 },
  { label: "Hole.3", icon: "hole27", level: 1, mark: "-" },
];

function TreeRow({ node }: { node: Node }) {
  const { label, icon, level, mark, last } = node;
  const hatched = icon === "plane27" || icon === "sketch27";
  return (
    <li className="flex min-h-0 flex-1 items-center">
      {level > 0 && <span className="w-[23px]" />}
      {level === 2 && (
        <span className="relative w-[22px] self-stretch">
          <span className="absolute -top-1 bottom-0 left-[10px] w-[3px] bg-white" />
        </span>
      )}
      {level >= 0 && (
        <span className="relative mr-[1px] w-[23px] self-stretch">
          <span className={"absolute -top-1 left-[10px] w-[3px] bg-white " + (last ? "h-5" : "bottom-0")} />
          <span className="absolute top-1/2 right-0 left-[10px] -mt-[2px] h-[3px] bg-white" />
          {mark && (
            <button
              type="button"
              aria-label={(mark === "+" ? "Expand " : "Collapse ") + label}
              className="absolute top-1/2 left-[5px] -mt-[8px] flex size-[13px] items-center justify-center rounded-full bg-[#8f8f8f]"
            >
              <span className="absolute h-[3px] w-[9px] bg-black" />
              {mark === "+" && <span className="absolute h-[9px] w-[3px] bg-black" />}
            </button>
          )}
        </span>
      )}
      <span
        className={
          "flex size-[27px] shrink-0 items-center justify-center " +
          (hatched ? "bg-[repeating-conic-gradient(#c3cbd4_0%_25%,#55567f_0%_50%)] bg-[length:4px_4px]" : "")
        }
      >
        <Icon name={icon} className={hatched ? "size-6" : "size-[26px]"} />
      </span>
      <span
        className={
          "rounded-[3px] bg-[#333366] px-[3px] font-['Noto_Sans',sans-serif] text-[16px] leading-[22px] whitespace-nowrap text-white " +
          (label === "PartBody" ? "underline decoration-2 underline-offset-4" : "")
        }
      >
        {label}
      </span>
    </li>
  );
}

function Model() {
  const face = "#757575";
  return (
    <svg viewBox="580 440 790 300" className="absolute top-[259px] left-[553px] h-[300px] w-[790px]" role="img" aria-label="Pipe bend part">
      <defs>
        <linearGradient id="tube" x1="0" y1="0" x2="0" y2="1">
          <stop offset="0" stopColor="#747474" />
          <stop offset="0.3" stopColor="#8e8e8e" />
          <stop offset="0.5" stopColor="#6a6a6a" />
          <stop offset="0.85" stopColor="#343434" />
          <stop offset="1" stopColor="#2e2e2e" />
        </linearGradient>
        <linearGradient id="bore" x1="0" y1="0" x2="0" y2="1">
          <stop offset="0" stopColor="#303030" />
          <stop offset="0.5" stopColor="#686868" />
          <stop offset="0.85" stopColor="#8e8e8e" />
          <stop offset="1" stopColor="#868686" />
        </linearGradient>
        <linearGradient id="bore2" x1="0" y1="0" x2="0" y2="1">
          <stop offset="0" stopColor="#2c2c2c" />
          <stop offset="0.5" stopColor="#5e5e5e" />
          <stop offset="1" stopColor="#7c7c7c" />
        </linearGradient>
        <radialGradient id="bore2glow" cx="0.08" cy="0.66" r="0.4">
          <stop offset="0" stopColor="#c0c0c0" stopOpacity="0.85" />
          <stop offset="0.4" stopColor="#9a9a9a" stopOpacity="0.35" />
          <stop offset="1" stopColor="#8c8c8c" stopOpacity="0" />
        </radialGradient>
        <radialGradient id="spot">
          <stop offset="0" stopColor="#e4e4e4" />
          <stop offset="0.35" stopColor="#c4c4c4" />
          <stop offset="1" stopColor="#8c8c8c" stopOpacity="0" />
        </radialGradient>
        <linearGradient id="foot" x1="0" y1="0" x2="0" y2="1">
          <stop offset="0" stopColor="#6c6c68" />
          <stop offset="1" stopColor="#34342e" />
        </linearGradient>
      </defs>
      <rect x="616" y="511" width="403" height="156" fill="url(#tube)" />
      <ellipse cx="621" cy="562" rx="4" ry="22" fill="url(#spot)" />
      <circle cx="996" cy="564" r="27" fill="url(#spot)" />
      <g stroke="#0c0c0c" strokeWidth="1.3" fill="none">
        <path d="M584 478 H610 Q616 478 616 486 V690 Q616 698 608 698 H588 Q584 698 584 694 Z" fill={face} />
        <path d="M584 682 H616 V690 Q616 698 608 698 H588 Q584 698 584 694 Z" fill="url(#foot)" />
        <path d="M607 478 V698 M584 495 H616 M616 589.5 H1019 M625 511 V667 M965 511 V668" />
        <rect x="1237" y="527" width="125" height="124" rx="3" fill="url(#tube)" />
        <path d="M1358 527 V651" />
        <path
          d="M675.5 637.4 L720 710.3 A41 41 0 0 0 790 710.3 L834.5 637.4 A93 93 0 0 0 834.5 540.6 L790 467.7 A41 41 0 0 0 720 467.7 L675.5 540.6 A93 93 0 0 0 675.5 637.4 Z"
          fill={face}
        />
        <circle cx="755" cy="488" r="11" fill="#414174" />
        <circle cx="755" cy="691" r="11" fill="#484678" />
        <circle cx="755" cy="589" r="54" />
        <circle cx="755" cy="589" r="46.5" fill="url(#bore)" />
        <path d="M708.500 589.5 H801.500" />
        <rect x="1019" y="479.500" width="218" height="219" rx="16" fill={face} />
        <circle cx="1048" cy="509" r="9" fill="#414174" />
        <circle cx="1207" cy="509" r="9" fill="#414174" />
        <circle cx="1048" cy="669" r="9" fill="#484678" />
        <circle cx="1207" cy="669" r="9" fill="#484678" />
        <circle cx="1128" cy="589" r="82" />
        <circle cx="1128" cy="589" r="62.500" fill="url(#bore2)" />
        <circle cx="1128" cy="589" r="62.500" fill="url(#bore2glow)" />
        <path d="M1065.500 589.5 H1190.500" />
      </g>
    </svg>
  );
}

function Compass() {
  return (
    <svg viewBox="1640 305 160 155" className="absolute top-[124px] right-[63px] h-[155px] w-[160px]" role="img" aria-label="Compass">
      <path d="M1650 317 H1727 A57 57 0 0 1 1689 414 Q1666 413 1650 398 Z" fill="#1c3d57" stroke="#ccccff" strokeWidth="2.500" strokeLinejoin="round" />
      <path d="M1689 357.500 H1764 M1689 357 V433" stroke="#ccccff" strokeWidth="2.500" />
      <rect x="1683" y="350" width="14" height="14" fill="#e00000" />
      <g fill="#dcdc28" fontFamily="'Noto Sans', sans-serif" fontSize="20">
        <text x="1702" y="374">z</text>
        <text x="1777" y="377">y</text>
        <text x="1706" y="449">x</text>
      </g>
    </svg>
  );
}

const menus = [
  ["File", "w-[63px]"],
  ["Edit", "w-[66px]"],
  ["View", "w-[73px]"],
  ["Insert", "w-[80px]"],
  ["Tools", "w-[78px]"],
  ["Window", "w-[102px]"],
  ["Help", "w-[60px]"],
];

export default function App() {
  return (
    <div className="flex h-screen flex-col overflow-hidden bg-[#cfcfe5] font-['Open_Sans','Noto_Sans',sans-serif] text-[#1c1c28]">
      <header className="relative flex h-[35px] shrink-0 items-center bg-white pl-[3px]">
        <span className="absolute top-0 left-[779px] flex h-[2px] w-[361px] bg-[#d8d8d8]">
          <span className="w-[72px] bg-[#1a78d8]" />
        </span>
        <AppLogo className="size-[21px]" />
        <h1 className="ml-[7px] text-[17px] leading-6 text-black">CATIA V5 - [Wooden_L-bend-pattern.CATPart]</h1>
        <div className="ml-auto flex h-full items-center">
          <button type="button" aria-label="Minimize" className="flex h-full w-[68px] items-center justify-center">
            <span className="h-px w-[15px] bg-black" />
          </button>
          <button type="button" aria-label="Restore" className="flex h-full w-[72px] items-center justify-center">
            <svg viewBox="0 0 16 16" className="size-4">
              <path d="M1 4.500 H11.500 V15 H1 Z M4 4 V1.500 H14.500 V12 H12" fill="none" stroke="#000" strokeWidth="1.200" />
            </svg>
          </button>
          <button type="button" aria-label="Close" className="flex h-full w-[66px] items-center justify-center">
            <svg viewBox="0 0 16 16" className="size-4">
              <path d="M1 1 L15 15 M15 1 L1 15" stroke="#000" strokeWidth="1.200" />
            </svg>
          </button>
        </div>
      </header>

      <nav aria-label="Main menu" className="flex h-7 shrink-0 items-center text-[17px] leading-6">
        <AppLogo className="mr-[1px] ml-[1px] h-6 w-7" />
        <button type="button" className="h-full w-[73px] bg-[#fce4bc] pl-[11px] text-left">
          <span className="underline underline-offset-2">S</span>tart
        </button>
        <button type="button" className="w-[161px] pl-[10px] text-left whitespace-nowrap">
          ENOVIA V5 VPM
        </button>
        {menus.map(([label, width]) => (
          <button key={label} type="button" className={"text-left " + width}>
            <span className="underline underline-offset-2">{label[0]}</span>
            {label.slice(1)}
          </button>
        ))}
        <div className="ml-auto flex h-[26px] gap-[3px]">
          <button type="button" aria-label="Minimize document" className="flex w-[26px] items-end justify-center bg-white pb-[6px]">
            <span className="h-[3px] w-[9px] bg-[#747c8c]" />
          </button>
          <button type="button" aria-label="Restore document" className="flex w-[26px] items-center justify-center bg-white">
            <svg viewBox="0 0 14 14" className="size-[14px]">
              <path d="M1 6 H9 V13 H1 Z M1 7 H9 M4 5 V2 H12 V9 H10 M4 3 H12" fill="none" stroke="#747c8c" strokeWidth="1.500" />
            </svg>
          </button>
          <button type="button" aria-label="Close document" className="flex w-[22px] items-center justify-center bg-white">
            <svg viewBox="0 0 12 12" className="size-3">
              <path d="M1 1 L11 11 M11 1 L1 11" stroke="#747c8c" strokeWidth="2.600" />
            </svg>
          </button>
        </div>
      </nav>

      <section
        aria-label="Toolbars"
        className="h-[118px] shrink-0 border-b-4 border-b-[#77777f] bg-[linear-gradient(#ffffff_0,#f6f6fb_5px,#cfcfe5_19px,#cfcfe5_98px,#b4b4c6_107px,#9c9cac_114px)]"
      >
        <div className="flex h-[59px] gap-[15px] pl-[14px]">
          <Tools label="Studio" items={["studio"]} className="mr-[9px]" />
          <Tools label="Dress-up" items={["fillet", "draft", "shell+", "thickness", "replaceface"]} />
          <Tools label="Surface based" items={["split", "thick", "closesurf", "sew"]} />
          <Tools label="Analysis" items={["wireaxis", "extremum", "projection"]} className="mr-[30px]" />
          <Tools label="Tables" items={["table", "dimension"]} />
          <Tools label="Replication" items={["repeat+", "pattern+", "pastefeat", "catalog+", "factory+"]} />
          <Tools label="Effects" items={["sparkle"]} className="ml-[2px]" />
          <Tools label="Wireframe" items={["point+", "line+", "plane+", "|", "sweep+", "loft", "blend+", "|", "circle+", "spline+"]} />
          <Tools label="Law" items={["graph"]} />
          <Tools label="Surfaces" items={["extrapol+", "offset+", "translatesurf+", "dome", "bumps", "stack"]} className="ml-[1px]" />
        </div>
        <div className="flex h-[54px] gap-5 pl-[594px]">
          <Tools label="Bodies" items={["gears+", "sketchpos+"]} />
          <Tools label="Curves" items={["spline", "helix", "spiral", "polywire", "foldsurf"]} />
          <Tools label="Volumes" items={["domecap", "boxtool", "boxmove"]} />
        </div>
      </section>

      <main className="flex min-h-0 flex-1">
        <div aria-label="Tree scroll bar" className="flex w-[27px] shrink-0 flex-col border-l-[3px] border-l-[#9a9ab4] bg-[#6464c4]">
          <button type="button" aria-label="Scroll up" className="flex h-[26px] shrink-0 items-center justify-center border-b border-b-[#282860] bg-[#7a7aff] pt-[2px]">
            <svg viewBox="0 0 14 14" className="size-[14px]">
              <path d="M7 0 L14 14 H0 Z" fill="#000" />
            </svg>
          </button>
          <div className="h-[8px] shrink-0 border-b-2 border-b-[#c4c4f0] bg-[#5858c8]" />
          <div className="h-[364px] shrink-0 border-b border-b-[#333380] bg-[#7b7bff]" />
          <div className="min-h-0 flex-1 bg-[repeating-conic-gradient(#5656b8_0%_25%,#6c6cd2_0%_50%)] bg-[length:4px_4px]" />
          <button type="button" aria-label="Scroll down" className="mb-[1px] flex h-[24px] shrink-0 items-center justify-center border-t border-t-[#a0a0f0] bg-[#6c6cf0]">
            <svg viewBox="0 0 14 14" className="size-[14px]">
              <path d="M7 14 L14 0 H0 Z" fill="#000" />
            </svg>
          </button>
        </div>

        <section
          aria-label="3D view"
          className="relative min-w-0 flex-1 overflow-hidden bg-[linear-gradient(#333366_0%,#3e3e6d_40%,#474679_66%,#56517f_74%,#8583a6_88%,#ababc1_100%)]"
        >
          <ul aria-label="Specification tree" className="-mt-[14px] -ml-[1px] flex h-[calc(100%+31px)] w-64 flex-col">
            {tree.map((node) => (
              <TreeRow key={node.label} node={node} />
            ))}
          </ul>
          <Model />
          <Compass />
          <p className="absolute top-[269px] left-[552px] flex items-baseline whitespace-nowrap text-[#dcdce2] [text-shadow:1px_2px_1px_#303030]">
            <span className="font-['Noto_Sans_CJK_SC',sans-serif] text-[79px] leading-[96px] font-light">莫西网</span>
            <span className="font-['Liberation_Serif',serif] text-[70px] leading-[96px]">
              www.3dmox.<span className="ml-5">com</span>
            </span>
          </p>
          <svg viewBox="0 -12 60 72" className="absolute right-0 bottom-0 h-[72px] w-[60px]" aria-label="View axes" role="img">
            <path d="M4 52 V13 H40" fill="none" stroke="#fff" strokeWidth="1.500" />
            <text x="43" y="17" fill="#fff" fontFamily="'Noto Sans', sans-serif" fontSize="18">y</text>
            <text x="5" y="53" fill="#fff" fontFamily="'Noto Sans', sans-serif" fontSize="18">x</text>
          </svg>
        </section>

        <aside className="flex w-[53px] shrink-0 flex-col bg-[linear-gradient(90deg,#ffffff_0,#ffffff_6px,#dcdcec_10px,#cfcfe5_18px,#cfcfe5_44px,#bcbccc_53px)] pt-[8px]">
          <SideTools label="Workbench" items={["workbench"]} className="" />
          <SideTools label="Selection" items={["select+", "seltrap+"]} className="mt-[24px]" />
          <SideTools label="Sketcher" items={["sketcher+"]} className="mt-[79px]" />
          <SideTools label="Axis" items={["axisplane+"]} className="mt-[13px]" />
          <SideTools label="Operations" items={["fourpat+", "cutsurf+", "boxmove+", "arcsurf+", "offsetplane+", "yellowcyan+"]} className="mt-[12px]" />
        </aside>
      </main>

      <section
        aria-label="Standard toolbars"
        className="flex h-[57px] shrink-0 gap-[15px] border-b-2 border-b-[#74747e] bg-[linear-gradient(#ffffff_0,#f6f6fb_6px,#cfcfe5_20px,#cfcfe5_38px,#a8a8b6_54px)] pl-[10px]"
      >
        <Tools label="Knowledge" items={["formula", "comment", "chain", "calendar+", "relations", "lock+", "equiv"]} />
        <Tools label="Material" items={["channel"]} />
        <Tools label="Measure" items={["measure", "clamp", "weight"]} />
        <Tools label="Replay" items={["replay"]} />
        <Tools
          label="View"
          items={["plane3d", "fit", "pan", "rotate", "zoomin", "zoomout", "normal", "multiview", "cube+", "cylinder+", "hide", "swap"]}
        />
        <Tools
          label="Standard"
          items={["newdoc", "open", "save", "print", "cut", "copy", "paste", "undo+", "redo+", "whatsthis"]}
          className="ml-auto"
        />
        <svg viewBox="0 0 64 50" className="mr-[5px] ml-8 h-[50px] w-16 shrink-0" role="img" aria-label="DS CATIA">
          <path d="M15 4 Q27 1 28 7 Q27 13 18 16 Q24 10 23 7 Q21 5 15 6 Z" fill="#d83a3c" />
          <g fontFamily="'Liberation Sans', sans-serif" fontStyle="italic">
            <text x="3" y="33" fontSize="22" fill="#5a4690">D</text>
            <text x="20" y="32" fontSize="22" fill="#ee9c30">S</text>
            <text x="12" y="48" fontSize="15" fontWeight="bold" fill="#54448c">CATIA</text>
          </g>
        </svg>
      </section>

      <footer className="flex h-[29px] shrink-0 items-center pl-1">
        <p role="status" className="pt-[3px] text-[17px] leading-6">Select an object or a command</p>
        <input
          aria-label="Power input"
          className="mt-1 ml-auto h-[26px] w-[446px] border-t-2 border-l-2 border-t-[#77777f] border-l-[#77777f] bg-white px-2 outline-none"
        />
        <button type="button" aria-label="Dialog" className="ml-1 flex h-full w-[48px] items-center justify-center border-r-2 border-r-[#9a9aac]">
          <Icon name="greybox" className="size-[22px]" />
        </button>
        <button type="button" aria-label="Information" className="flex h-full w-[49px] items-center justify-center border-l border-l-white">
          <Icon name="infobox" className="size-[22px]" />
        </button>
      </footer>
    </div>
  );
}
